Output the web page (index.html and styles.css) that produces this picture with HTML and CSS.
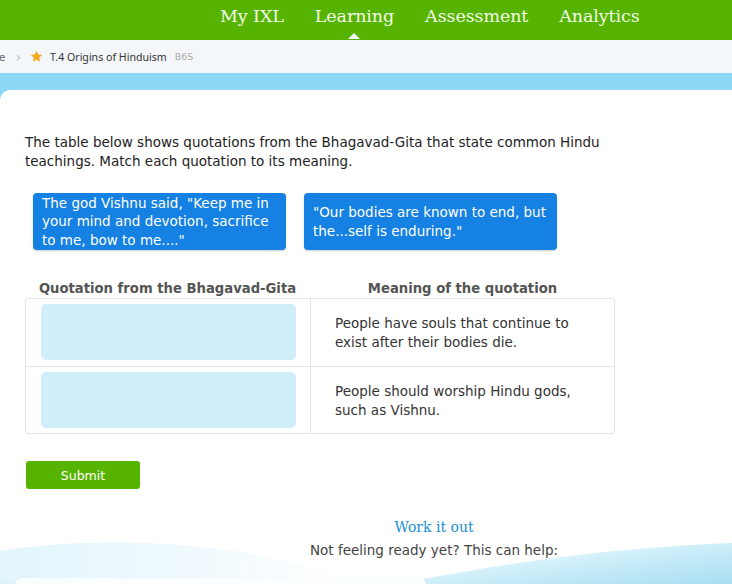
FILE: index.html
```html
<!DOCTYPE html>
<html lang="en">
<head>
 <meta charset="UTF-8">
 <title>T.4 Origins of Hinduism</title>
 <link rel="stylesheet" href="styles.css">
</head>
<body>
 <header class="top-nav">
  <a class="nav-item">My IXL</a>
  <a class="nav-item active">Learning</a>
  <a class="nav-item">Assessment</a>
  <a class="nav-item">Analytics</a>
 </header>

 <div class="crumbs">
  <span class="crumb-prev">e</span>
  <span class="crumb-sep">&#x203A;</span>
  <svg class="crumb-star" width="13" height="13" viewBox="0 0 24 24"><path d="M12 1.5l3.2 7 7.3.7-5.5 5 1.6 7.3L12 17.8l-6.6 3.7L7 14.2 1.5 9.2l7.3-.7z" fill="#f6a81c"/></svg>
  <span class="crumb-title">T.4 Origins of Hinduism</span>
  <span class="crumb-code">B6S</span>
 </div>

 <div class="band">
  <main class="card">
   <p class="question">The table below shows quotations from the Bhagavad-Gita that state common Hindu teachings. Match each quotation to its meaning.</p>

   <div class="tiles">
    <div class="tile">The god Vishnu said, "Keep me in your mind and devotion, sacrifice to me, bow to me...."</div>
    <div class="tile">"Our bodies are known to end, but the...self is enduring."</div>
   </div>

   <div class="match">
    <div class="match-head">
     <div class="col-a">Quotation from the Bhagavad-Gita</div>
     <div class="col-b">Meaning of the quotation</div>
    </div>
    <div class="match-table">
     <div class="match-row">
      <div class="col-a"><div class="drop"></div></div>
      <div class="col-b meaning">People have souls that continue to exist after their bodies die.</div>
     </div>
     <div class="match-row">
      <div class="col-a"><div class="drop"></div></div>
      <div class="col-b meaning">People should worship Hindu gods, such as Vishnu.</div>
     </div>
    </div>
   </div>

   <button class="submit">Submit</button>

   <section class="work-it-out">
    <svg class="waves" width="732" height="66" viewBox="0 0 732 66" preserveAspectRatio="none">
     <defs>
      <linearGradient id="w1" x1="0" y1="0" x2="1" y2="0">
       <stop offset="0" stop-color="#e2f5fc"/>
       <stop offset="0.5" stop-color="#f1fafe"/>
       <stop offset="1" stop-color="#ffffff" stop-opacity="0"/>
      </linearGradient>
      <linearGradient id="w2" x1="0" y1="0" x2="1" y2="1">
       <stop offset="0" stop-color="#ffffff" stop-opacity="0"/>
       <stop offset="0.5" stop-color="#cdeef9"/>
       <stop offset="0.85" stop-color="#a6ddf2"/>
       <stop offset="1" stop-color="#d6f1ea"/>
      </linearGradient>
     </defs>
     <path d="M0 12 C60 2 140 0 220 10 C300 20 360 42 420 66 L0 66Z" fill="url(#w1)"/>
     <path d="M0 42 C40 44 80 56 120 66 L0 66Z" fill="#d8f3f3" opacity="0.7"/>
     <path d="M260 66 C400 50 520 12 732 4 L732 66Z" fill="url(#w2)"/>
    </svg>
    <h2 class="wio-title">Work it out</h2>
    <p class="wio-text">Not feeling ready yet? This can help:</p>
    <div class="help-card"></div>
   </section>
  </main>
 </div>
</body>
</html>
```

FILE: styles.css
```css
body {
 margin: 0;
 width: 732px;
 height: 584px;
 overflow: hidden;
 font-family: "DejaVu Sans", Verdana, sans-serif;
 color: #333;
 background: #fff;
}

/* top navigation */
.top-nav {
 height: 40px;
 background-color: #56b400;
 display: flex;
 align-items: center;
 padding-left: 220px;
 gap: 31px;
 box-sizing: border-box;
 position: relative;
}

.nav-item {
 font-family: "DejaVu Serif", "Liberation Serif", serif;
 font-size: 17.5px;
 color: #f2faea;
 letter-spacing: -0.1px;
 margin-top: -9px;
 position: relative;
}

.nav-item.active::after {
 content: "";
 position: absolute;
 left: 50%;
 bottom: -13px;
 margin-left: -6px;
 border-left: 6px solid transparent;
 border-right: 6px solid transparent;
 border-bottom: 6px solid #f4f7f9;
}

/* breadcrumb */
.crumbs {
 height: 33px;
 background-color: #f4f7f9;
 display: flex;
 align-items: center;
 font-size: 10.5px;
 color: #333;
}

.crumb-prev {
 color: #666;
 margin-left: -1px;
}

.crumb-sep {
 color: #bbb;
 font-size: 14px;
 margin: 0 9px 0 10px;
}

.crumb-star {
 margin-right: 7px;
}

.crumb-title {
 font-family: "Noto Sans", "DejaVu Sans", sans-serif;
 font-size: 10.6px;
}

.crumb-code {
 color: #aaa;
 font-size: 9.5px;
 margin-left: 8px;
}

/* main card */
.band {
 background-color: #8dd8f4;
 padding-top: 17px;
}

.card {
 background: #fff;
 border-top-left-radius: 10px;
 padding: 1px 0 0;
 position: relative;
 height: 494px;
 box-sizing: border-box;
 overflow: hidden;
}

.question {
 margin: 42px 0 0 25px;
 width: 610px;
 font-size: 13.5px;
 line-height: 19px;
 color: #222;
}

.tiles {
 display: flex;
 gap: 18px;
 margin: 22px 0 0 33px;
}

.tile {
 width: 253px;
 height: 57px;
 box-sizing: border-box;
 padding: 0 9px;
 display: flex;
 align-items: center;
 background-color: #1581e2;
 color: #fff;
 font-size: 13.5px;
 line-height: 18.5px;
 border-radius: 4px;
 box-shadow: 0 1px 2px rgba(0, 0, 0, 0.2);
}

/* matching table */
.match {
 margin: 30px 0 0 25px;
 width: 590px;
}

.match-head {
 display: flex;
 font-weight: bold;
 font-size: 13.2px;
 color: #555;
 line-height: 18px;
}

.match-head .col-a,
.match-head .col-b {
 text-align: center;
}

.col-a {
 width: 285px;
}

.col-b {
 flex: 1;
}

.match-table {
 border: 1px solid #e4e4e4;
 border-radius: 4px;
}

.match-row {
 display: flex;
 height: 67px;
 box-sizing: border-box;
}

.match-row + .match-row {
 border-top: 1px solid #e4e4e4;
}

.match-row .col-a {
 padding: 5px 14px 0 15px;
 box-sizing: border-box;
 border-right: 1px solid #e4e4e4;
}

.drop {
 height: 56px;
 background-color: #d1effb;
 border-radius: 5px;
}

.meaning {
 display: flex;
 align-items: center;
 padding: 1px 36px 0 24px;
 font-size: 13.5px;
 line-height: 19px;
 color: #333;
}

.submit {
 display: block;
 margin: 27px 0 0 26px;
 width: 114px;
 height: 28px;
 border: none;
 border-radius: 3px;
 background-color: #56b400;
 color: #fff;
 font-family: "DejaVu Sans", Verdana, sans-serif;
 font-size: 12.5px;
 padding: 0;
}

/* work it out */
.work-it-out {
 position: relative;
 margin-top: 28px;
 padding-left: 136px;
 text-align: center;
 height: 95px;
}

.waves {
 position: absolute;
 left: 0;
 top: 22px;
}

.wio-title {
 position: relative;
 margin: 0;
 font-family: "DejaVu Serif", "Liberation Serif", serif;
 font-weight: normal;
 font-size: 14px;
 line-height: 20px;
 color: #1a8fd6;
}

.wio-text {
 position: relative;
 margin: 4px 0 0;
 font-size: 13.5px;
 line-height: 18px;
 color: #444;
}

.help-card {
 position: absolute;
 left: 15px;
 top: 61px;
 width: 411px;
 height: 30px;
 background: #fbfeff;
 border-radius: 6px 6px 0 0;
 box-shadow: 0 0 1px rgba(0, 0, 0, 0.15);
}
```
